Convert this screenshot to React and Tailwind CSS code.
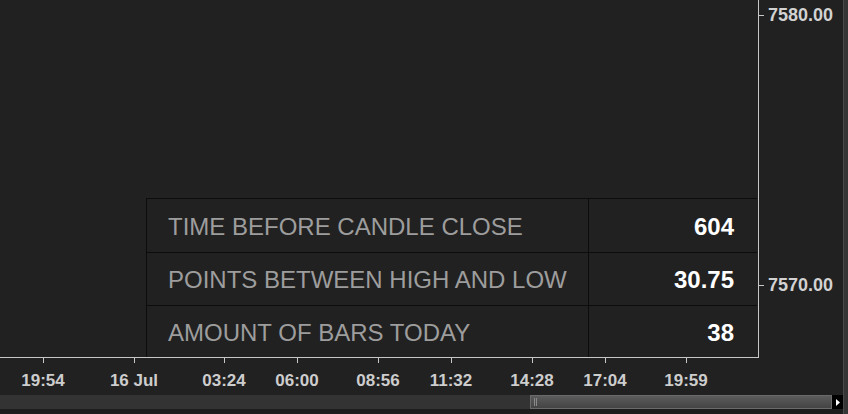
import React from 'react'

const stats = [
  { label: 'TIME BEFORE CANDLE CLOSE', value: '604', h: 'h-[54px] border-b' },
  { label: 'POINTS BETWEEN HIGH AND LOW', value: '30.75', h: 'h-[53px] border-b' },
  { label: 'AMOUNT OF BARS TODAY', value: '38', h: 'h-[51px]' },
]

const timeTicks = [
  { x: 43, label: '19:54' },
  { x: 134, label: '16 Jul' },
  { x: 224, label: '03:24' },
  { x: 297, label: '06:00' },
  { x: 378, label: '08:56' },
  { x: 451, label: '11:32' },
  { x: 532, label: '14:28' },
  { x: 605, label: '17:04' },
  { x: 686, label: '19:59' },
]

const priceTicks = [
  { y: 15, label: '7580.00' },
  { y: 285, label: '7570.00' },
]

function StatsTable() {
  return (
    <div className="w-[611px] border-l border-t border-[#0c0c0c] bg-[#212121]">
      {stats.map((row) => (
        <div key={row.label} className={`flex border-[#0c0c0c] ${row.h}`}>
          <div className="flex w-[442px] items-center border-r border-[#0c0c0c] pl-[21px] pt-[2px] text-[24px] text-[#9d9d9d]">
            {row.label}
          </div>
          <div className="flex flex-1 items-center justify-end pr-[23px] pt-[2px] text-[24px] font-bold text-white">
            {row.value}
          </div>
        </div>
      ))}
    </div>
  )
}

export default function App() {
  return (
    <div
      className="flex h-[414px] w-[848px] overflow-hidden bg-[#212121]"
      style={{ fontFamily: '"Liberation Sans", Arial, sans-serif' }}
    >
      <div className="flex w-[843px] flex-col">
        {/* plot + price axis */}
        <div className="flex h-[358px]">
          <div className="flex w-[759px] flex-col items-start justify-end border-b border-r border-[#c8c8c8] pl-[146px]">
            <StatsTable />
          </div>
          <div className="relative flex-1">
            {priceTicks.map((p) => (
              <div
                key={p.label}
                className="absolute left-0 flex -translate-y-1/2 items-center"
                style={{ top: p.y }}
              >
                <span className="h-px w-[5px] bg-[#c8c8c8]" />
                <span className="ml-[4px] text-[18px] font-bold leading-none text-[#d2d2d2]">{p.label}</span>
              </div>
            ))}
          </div>
        </div>

        {/* time axis */}
        <div className="relative h-[37px]">
          {timeTicks.map((t) => (
            <div key={t.label} className="absolute top-0" style={{ left: t.x }}>
              <span className="absolute left-0 top-0 h-[5px] w-px bg-[#c8c8c8]" />
              <span className="absolute left-0 top-[14px] -translate-x-1/2 whitespace-nowrap text-[17px] font-bold leading-none text-[#cdcdcd]">
                {t.label}
              </span>
            </div>
          ))}
        </div>

        {/* scrollbar */}
        <div className="flex h-[14px] bg-[#333333]">
          <div className="w-[530px]" />
          <div className="flex flex-1 items-center border border-[#6a6a6a] bg-gradient-to-b from-[#5c5c5c] to-[#444444] pl-[3px]">
            <span className="h-[8px] w-[3px] border-x border-[#8a8a8a]" />
          </div>
          <div className="flex w-[11px] items-center justify-center bg-black">
            <svg width="4" height="7" viewBox="0 0 4 7">
              <path d="M0 0 L4 3.5 L0 7 Z" fill="#ffffff" />
            </svg>
          </div>
        </div>
        <div className="flex-1 bg-[#1d1d1d]" />
      </div>
      <div className="w-[5px] border-l border-[#4a4a4a] bg-[#363636]" />
    </div>
  )
}
